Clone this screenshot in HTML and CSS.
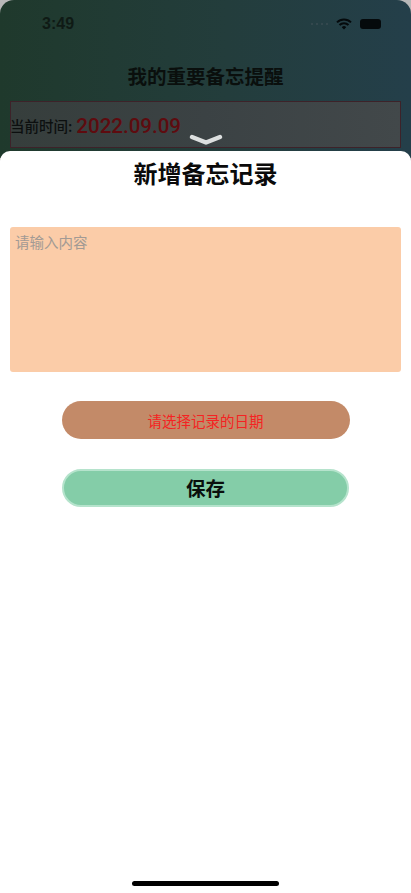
FILE: index.html
```html
<!DOCTYPE html>
<html lang="zh-CN">
<head>
<meta charset="utf-8">
<title>新增备忘记录</title>
<link rel="stylesheet" href="styles.css">
</head>
<body>
<div class="screen">
  <div class="backdrop">
    <div class="status">
      <span class="clock">3:49</span>
      <div class="status-icons">
        <span class="signal"><i></i><i></i><i></i><i></i></span>
        <svg class="wifi" width="16" height="12" viewBox="0 0 16 12"><path d="M1 4.400a10 10 0 0 1 14 0M3.500 7a6.400 6.400 0 0 1 9 0" fill="none" stroke="#050a0c" stroke-width="2"/><path d="M8 11.500 5.800 9.200a3.100 3.100 0 0 1 4.400 0z" fill="#050a0c"/></svg>
        <span class="battery"></span>
      </div>
    </div>
    <h1 class="page-title">我的重要备忘提醒</h1>
    <div class="date-card">
      <span class="date-label">当前时间:</span>
      <span class="date-value">2022.09.09</span>
    </div>
    <svg class="chevron" width="34" height="13" viewBox="0 0 34 13"><path d="M3 3 17 8.500 31 3" fill="none" stroke="#dcdfdf" stroke-width="4.500" stroke-linecap="round" stroke-linejoin="round"/></svg>
  </div>
  <main class="sheet">
    <h2 class="sheet-title">新增备忘记录</h2>
    <div class="memo-input">请输入内容</div>
    <div class="date-button">请选择记录的日期</div>
    <div class="save-button">保存</div>
    <div class="home-indicator"></div>
  </main>
</div>
</body>
</html>
```
FILE: styles.css
```css
* { box-sizing: border-box; margin: 0; padding: 0; }
html, body { width: 411px; height: 893px; overflow: hidden; background: #fff; }
body { font-family: "Liberation Sans", "Noto Sans CJK SC", sans-serif; }
.screen { position: relative; width: 411px; height: 893px; display: flex; flex-direction: column; background: #b8b8b8; }
.backdrop {
  position: relative;
  height: 158px;
  margin-bottom: -7px;
  padding: 0 10px;
  background: linear-gradient(90deg, #1f392c 0%, #233d3c 55%, #243f4a 100%);
  border-radius: 14px 14px 0 0;
  flex: none;
}
.status { height: 48px; padding: 0 20px 0 32px; display: flex; justify-content: space-between; align-items: center; }
.clock { font-size: 16px; font-weight: 700; color: #0f1a15; }
.status-icons { display: flex; align-items: center; gap: 8px; }
.signal { display: flex; gap: 3px; }
.signal i { width: 2px; height: 2px; border-radius: 50%; background: #3a4d52; }
.battery { width: 21px; height: 10px; background: #050a0c; border-radius: 3px; }
.page-title { margin-top: 15px; text-align: center; font-size: 19.500px; line-height: 26px; font-weight: 700; color: #0a0f0d; font-family: "Noto Sans CJK SC", sans-serif; }
.date-card {
  margin-top: 12px;
  height: 47px;
  border: 1.500px solid #3d2229;
  background: linear-gradient(90deg, #363e3c 0%, #3b4244 50%, #42484a 100%);
  display: flex;
  align-items: center;
  padding-top: 2px;
}
.date-label { margin-left: -1px; font-size: 14.500px; font-weight: 500; color: #0c0f0f; font-family: "Noto Sans CJK SC", sans-serif; }
.date-value { margin-left: 4px; font-size: 20.500px; font-weight: 500; color: #5e0b0f; font-family: Roboto, "Liberation Sans", sans-serif; }
.chevron { position: absolute; left: 189px; top: 134px; }
.sheet { position: relative; flex: 1; background: #fff; border-radius: 10px 10px 0 0; padding: 8px 10px 0; display: flex; flex-direction: column; align-items: center; font-family: "Noto Sans CJK SC", sans-serif; }
.sheet-title { font-size: 24px; line-height: 28px; font-weight: 700; color: #0a0a0a; }
.memo-input { margin-top: 40px; width: 391px; height: 145px; background: #fbcca8; border-radius: 3px; padding: 5px 5px; font-size: 14.500px; line-height: 20px; color: #a29a94; }
.date-button { margin-top: 29px; width: 288px; height: 38px; border-radius: 19px; background: #c38a68; color: #f52222; font-size: 14.500px; display: flex; align-items: center; justify-content: center; }
.save-button { margin-top: 30px; width: 287px; height: 38px; border-radius: 19px; background: #84cda8; border: 2px solid #b5e3cc; color: #0a0f0c; font-size: 19.500px; font-weight: 700; padding-bottom: 2px; display: flex; align-items: center; justify-content: center; }
.home-indicator { position: absolute; left: 132px; top: 730px; width: 147px; height: 5px; border-radius: 3px; background: #000; }
```
